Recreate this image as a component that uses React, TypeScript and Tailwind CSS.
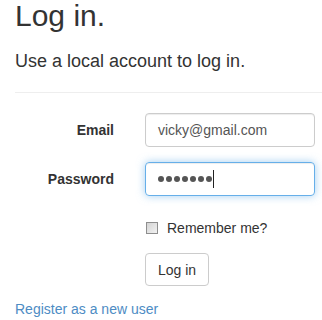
import React from 'react'

export default function App() {
  const dots = [0, 1, 2, 3, 4, 5, 6]

  return (
    <div className="min-h-[320px] bg-white pl-[15px] text-[#333] font-['Liberation_Sans',Arial,sans-serif]">
      <h2 className="text-[30px] leading-[32px] font-normal">Log in.</h2>
      <h4 className="mt-[19px] text-[18px] leading-[20px] font-normal">Use a local account to log in.</h4>
      <hr className="mt-[21px] border-0 border-t border-[#eee]" />

      <form className="mt-[20px]" onSubmit={(e) => e.preventDefault()}>
        <div className="flex items-center h-[34px]">
          <label className="w-[99px] text-right text-[14px] leading-[20px] font-bold">Email</label>
          <div className="ml-[31px] w-[170px] h-[34px] px-[12px] flex items-center border border-[#ccc] rounded-[4px] shadow-[inset_0_1px_1px_rgba(0,0,0,0.075)] text-[14px] text-[#555]">
            vicky@gmail.com
          </div>
        </div>

        <div className="flex items-center h-[34px] mt-[15px]">
          <label className="w-[99px] text-right text-[14px] leading-[20px] font-bold">Password</label>
          <div className="ml-[31px] w-[170px] h-[34px] px-[12px] flex items-center border border-[#66afe9] rounded-[4px] shadow-[inset_0_1px_1px_rgba(0,0,0,0.075),0_0_8px_rgba(102,175,233,0.6)]">
            <div className="flex items-center gap-[2.5px]">
              {dots.map((d) => (
                <span key={d} className="block w-[5.5px] h-[5.5px] rounded-full bg-[#555]" />
              ))}
            </div>
            <span className="block ml-[1px] w-[1px] h-[18px] bg-[#222]" />
          </div>
        </div>

        <div className="flex items-center mt-[22px] h-[20px] pl-[131px]">
          <span className="block w-[12px] h-[12px] border border-[#8e8e8e] bg-gradient-to-br from-[#d4d4d4] to-[#f2f2f2]" />
          <span className="ml-[9px] text-[14px] leading-[20px]">Remember me?</span>
        </div>

        <div className="mt-[15px] pl-[130px]">
          <button
            type="submit"
            className="h-[33px] px-[12px] border border-[#ccc] rounded-[4px] bg-white text-[14px] leading-[20px] text-[#333]"
          >
            Log in
          </button>
        </div>
      </form>

      <p className="mt-[13px] text-[14px] leading-[20px]">
        <a href="#" className="text-[#4d8cc4]">Register as a new user</a>
      </p>
    </div>
  )
}
